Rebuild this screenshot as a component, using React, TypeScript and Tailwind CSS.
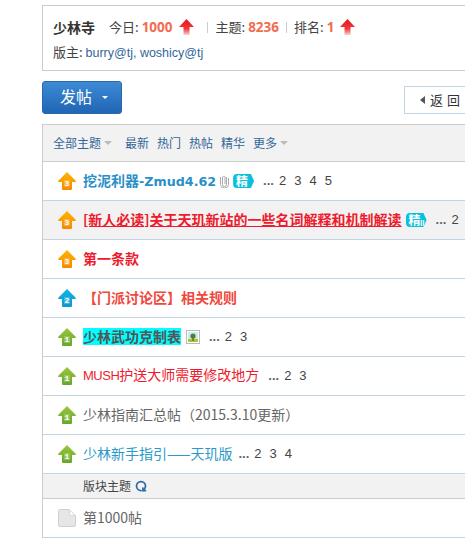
import { RotateCw } from "lucide-react";

const cjk = "font-['Noto_Sans_CJK_SC','Liberation_Sans',sans-serif]";

function UpIcon({ n, id, top, bottom }: { n: number; id: string; top: string; bottom: string }) {
  return (
    <svg width="18" height="18" viewBox="0 0 18 18" className="shrink-0">
      <defs>
        <linearGradient id={id} x1="0" y1="0" x2="0" y2="1">
          <stop offset="0" stopColor={top} />
          <stop offset="1" stopColor={bottom} />
        </linearGradient>
      </defs>
      <path d="M9 0 L18 9 Q18 10 17 10 L14 10 L14 17 Q14 18 13 18 L5 18 Q4 18 4 17 L4 10 L1 10 Q0 10 0 9 Z" fill={`url(#${id})`} />
      <rect x="6" y="8" width="6" height="7" fill="#fff" opacity="0.2" />
      <text x="9" y="14" textAnchor="middle" fontSize="8" fontWeight="700" fill="#fff" fontFamily="Liberation Mono, monospace">
        {n}
      </text>
    </svg>
  );
}

function RedArrow({ id }: { id: string }) {
  return (
    <svg width="15" height="16" viewBox="0 0 15 16" className="shrink-0">
      <defs>
        <linearGradient id={id} x1="0" y1="0" x2="0" y2="1">
          <stop offset="0" stopColor="#e8141c" />
          <stop offset="0.6" stopColor="#f0363a" />
          <stop offset="1" stopColor="#fbd0d0" />
        </linearGradient>
      </defs>
      <path d="M7.5 0 L15 8 L10.5 8 L10.5 16 L4.5 16 L4.5 8 L0 8 Z" fill={`url(#${id})`} />
    </svg>
  );
}

function Jing({ sub }: { sub?: boolean }) {
  return (
    <span className="relative ml-[4px] inline-flex h-[14px] w-[21px] shrink-0 items-center rounded-l-[4px] bg-[#0cc0dc] pl-[3px] text-[12px] leading-none font-bold text-white [clip-path:polygon(0_0,85%_0,100%_50%,85%_100%,0_100%)]">
      精
      {sub && <span className="absolute right-[2px] bottom-0 text-[7px] leading-none">II</span>}
    </span>
  );
}

function Paperclip() {
  return (
    <svg width="9" height="14" viewBox="0 0 9 14" fill="none" stroke="#aaa" strokeWidth="1" className="ml-[4px] shrink-0">
      <path d="M6.5 3 V10.5 A2 2 0 0 1 2.5 10.5 V3 A1.5 1.5 0 0 1 5 3 V10" />
      <path d="M8.5 4 V10.5 A4 3.5 0 0 1 0.5 10.5 V3" />
    </svg>
  );
}

function ImgIcon() {
  return (
    <svg width="14" height="14" viewBox="0 0 14 14" className="ml-[5px] shrink-0">
      <rect x="0.5" y="0.5" width="13" height="13" fill="#fff" stroke="#bbb" />
      <rect x="2" y="2" width="10" height="7" fill="#cfe6f8" />
      <rect x="2" y="9" width="10" height="3" fill="#a8c832" />
      <circle cx="7" cy="6" r="2.6" fill="#3f8a2a" />
      <rect x="6.3" y="7" width="1.4" height="4" fill="#8a5a20" />
    </svg>
  );
}

function DocIcon() {
  return (
    <svg width="18" height="18" viewBox="0 0 18 18" className="shrink-0">
      <path d="M1.5 0.5 H11.5 L17.5 6.5 V16 Q17.5 17.5 16 17.5 H2 Q0.5 17.5 0.5 16 V1.5 Q0.5 0.5 1.5 0.5 Z" fill="#e6e6e6" stroke="#d0d0d0" />
      <path d="M11.5 0.5 V6.5 H17.5 Z" fill="#fafafa" stroke="#d8d8d8" />
    </svg>
  );
}

function Pages({ items, tight }: { items: number[]; tight?: boolean }) {
  return (
    <span className={`${tight ? "ml-[6px]" : "ml-[9px]"} flex shrink-0 items-center gap-[8px] font-['Liberation_Sans',sans-serif] text-[13px] text-[#444]`}>
      <span className="mr-[-3px] font-bold text-[#666]">...</span>
      {items.map((p) => (
        <span key={p}>{p}</span>
      ))}
    </span>
  );
}

function Row({ children, icon, bg }: { children: React.ReactNode; icon: React.ReactNode; bg?: boolean }) {
  return (
    <div className={`flex h-[39px] items-center border-b border-[#c2d5e3] pl-[15px] text-[14px] whitespace-nowrap ${bg ? "bg-[#f2f2f2]" : ""}`}>
      <span className="mr-[7px] flex w-[18px] shrink-0">{icon}</span>
      {children}
    </div>
  );
}

export default function App() {
  return (
    <div className={`h-[542px] w-[465px] overflow-hidden bg-white pt-[5px] pl-[42px] text-[13px] text-[#444] ${cjk}`}>
      <div className="w-[440px]">
        <div className="h-[66px] border border-r-0 border-[#ccc] pt-[10px] pl-[10px]">
          <div className="flex h-[22px] items-center whitespace-nowrap">
            <b className="mr-[14px] text-[14px] font-bold text-[#333]">少林寺</b>
            <span>今日:</span>
            <b className="ml-[3px] font-['Noto_Sans'] text-[13.5px] text-[#f26c4f]">1000</b>
            <span className="mr-[13px] ml-[6px] flex"><RedArrow id="r1" /></span>
            <span className="mr-[8px] h-[11px] w-px bg-[#ccc]" />
            <span>主题:</span>
            <b className="ml-[3px] font-['Noto_Sans'] text-[13.5px] text-[#f26c4f]">8236</b>
            <span className="mx-[7px] h-[11px] w-px bg-[#ccc]" />
            <span>排名:</span>
            <b className="ml-[3px] font-['Noto_Sans'] text-[13.5px] text-[#f26c4f]">1</b>
            <span className="ml-[6px] flex"><RedArrow id="r2" /></span>
          </div>
          <div className="mt-[5px] leading-[18px] whitespace-nowrap">
            版主: <span className="font-['Liberation_Sans',sans-serif] text-[12.5px] text-[#369]">burry@tj, woshicy@tj</span>
          </div>
        </div>

        <div className="mt-[10px] flex items-end justify-between">
          <button className="flex h-[33px] w-[80px] items-center rounded-[3px] border border-[#2a6aa8] bg-gradient-to-b from-[#3d8ad6] to-[#1f66b4] pb-[3px] pl-[17px] text-[16px] font-normal text-white">
            发帖
            <span className="mt-[2px] ml-[10px] h-0 w-0 border-x-[3px] border-t-[3px] border-x-transparent border-t-white" />
          </button>
          <div className="flex h-[28px] w-[78px] items-center gap-[5px] border border-[#c2d5e3] pl-[15px] text-[13px] tracking-[4px] text-[#333]">
            <span className="h-0 w-0 border-y-[4px] border-r-[5px] border-y-transparent border-r-[#555]" />
            返回
          </div>
        </div>

        <div className="mt-[10px] border-l border-[#ccc]">
          <div className="flex h-[38px] items-center gap-[8px] border-y border-[#ccc] bg-[#f2f2f2] pl-[10px] text-[12px] text-[#369]">
            <span className="mr-[5px] flex items-center gap-[3px]">
              全部主题
              <span className="h-0 w-0 border-x-[4px] border-t-[4px] border-x-transparent border-t-[#bbb]" />
            </span>
            <span>最新</span>
            <span>热门</span>
            <span>热帖</span>
            <span>精华</span>
            <span className="flex items-center gap-[3px]">
              更多
              <span className="h-0 w-0 border-x-[4px] border-t-[4px] border-x-transparent border-t-[#bbb]" />
            </span>
          </div>
          <Row icon={<UpIcon n={3} id="a1" top="#ffb400" bottom="#f58a00" />}>
            <b className="mb-[1px] text-[#2b8fc8]">
              挖泥利器<span className="font-['DejaVu_Sans'] text-[12.7px]">-Zmud4.62</span>
            </b>
            <Paperclip />
            <Jing />
            <Pages items={[2, 3, 4, 5]} />
          </Row>
          <Row bg icon={<UpIcon n={3} id="a2" top="#ffb400" bottom="#f58a00" />}>
            <b className="mb-[2px] text-[#ee1b2e] underline">[新人必读]关于天玑新站的一些名词解释和机制解读</b>
            <Jing sub />
            <Pages items={[2]} />
          </Row>
          <Row icon={<UpIcon n={3} id="a3" top="#ffb400" bottom="#f58a00" />}>
            <b className="mb-[2px] text-[#ee1b2e]">第一条款</b>
          </Row>
          <Row icon={<UpIcon n={2} id="a4" top="#10b4e4" bottom="#0a9ad0" />}>
            <b className="mb-[2px] text-[#f0483c]">【门派讨论区】相关规则</b>
          </Row>
          <Row icon={<UpIcon n={1} id="a5" top="#9bc53d" bottom="#66a82a" />}>
            <b className="mb-[2px] bg-[#00ffff] leading-[17px] text-[#555]">少林武功克制表</b>
            <ImgIcon />
            <Pages items={[2, 3]} />
          </Row>
          <Row icon={<UpIcon n={1} id="a6" top="#9bc53d" bottom="#66a82a" />}>
            <span className="mb-[2px] text-[#ee1b2e]">
              <span className="font-['Liberation_Sans'] text-[13px] tracking-[-0.5px]">MUSH</span>护送大师需要修改地方
            </span>
            <Pages items={[2, 3]} />
          </Row>
          <Row icon={<UpIcon n={1} id="a7" top="#9bc53d" bottom="#66a82a" />}>
            <span className="mb-[2px] text-[#666]">少林指南汇总帖（2015.3.10更新）</span>
          </Row>
          <Row icon={<UpIcon n={1} id="a8" top="#9bc53d" bottom="#66a82a" />}>
            <span className="mb-[2px] text-[#2b99c9]">少林新手指引——天玑版</span>
            <Pages tight items={[2, 3, 4]} />
          </Row>
          <div className="flex h-[25px] items-center gap-[4px] border-b border-[#ccc] bg-[#f2f2f2] pl-[40px] text-[12px]">
            版块主题
            <RotateCw size={12} strokeWidth={3.5} className="rotate-90 text-[#2b6ca8]" />
          </div>
          <Row icon={<DocIcon />}>
            <span className="mb-[2px] text-[#666]">第1000帖</span>
          </Row>
        </div>
      </div>
    </div>
  );
}
